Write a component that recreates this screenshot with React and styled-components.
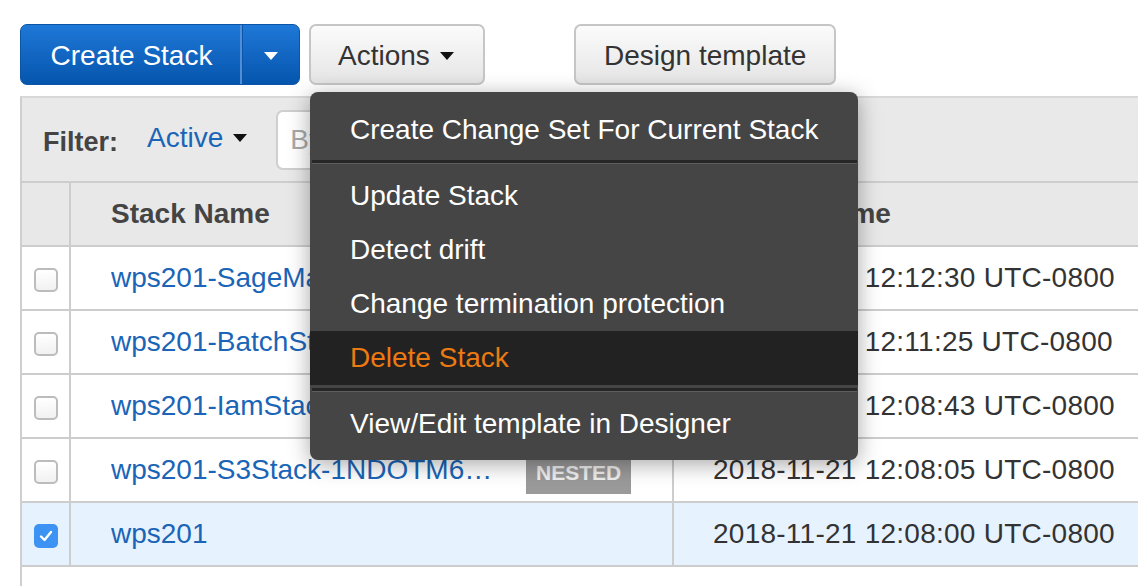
import React from "react";
import styled, { createGlobalStyle } from "styled-components";

const GlobalStyle = createGlobalStyle`
  html, body { margin: 0; padding: 0; background: #fff; }
  body { font-family: "Liberation Sans", Arial, Helvetica, sans-serif; overflow: hidden; }
  * { box-sizing: border-box; }
`;

const Page = styled.div`
  width: 1138px;
  height: 586px;
  padding: 24px 0 0 20px;
  overflow: hidden;
`;

const Toolbar = styled.div`
  display: flex;
  align-items: center;
  height: 61px;
`;

const SplitButton = styled.div`
  display: flex;
  width: 280px;
  height: 61px;
  border-radius: 7px;
  border: 1px solid #0b55a6;
  background: linear-gradient(#1f78d7, #0555ad);
  overflow: hidden;
`;

const SplitMain = styled.div`
  width: 219px;
  display: flex;
  align-items: center;
  justify-content: center;
  color: #fff;
  font-size: 28px;
  padding: 3px 0 0 2px;
`;

const SplitCaret = styled.div`
  flex: 1;
  display: flex;
  align-items: center;
  justify-content: center;
  padding-top: 2px;
  border-left: 2px solid #4f8fd9;
  box-shadow: inset 1px 0 0 #0a56ab;
`;

const Caret = styled.span`
  display: inline-block;
  width: 0;
  height: 0;
  border-left: ${(p) => p.$w / 2}px solid transparent;
  border-right: ${(p) => p.$w / 2}px solid transparent;
  border-top: ${(p) => p.$h}px solid ${(p) => p.$color};
  margin-left: ${(p) => p.$ml || 0}px;
`;

const GreyButton = styled.div`
  position: relative;
  height: 61px;
  width: ${(p) => p.$w}px;
  margin-left: ${(p) => p.$ml}px;
  border: 2px solid #c6c6c6;
  border-radius: 7px;
  background: linear-gradient(#fbfbfb, #e5e5e5);
  color: #333;
  font-size: 28px;
  display: flex;
  align-items: center;
  padding: 3px 0 0 ${(p) => p.$pl}px;
`;

const Menu = styled.div`
  position: absolute;
  left: -1px;
  top: 66px;
  width: 548px;
  background: #454545;
  border-radius: 8px;
  padding: 11px 0 9px;
  box-shadow: 0 4px 22px rgba(0, 0, 0, 0.35);
  z-index: 10;
`;

const MenuItem = styled.div`
  height: 54px;
  display: flex;
  align-items: center;
  padding-left: 40px;
  font-size: 28px;
  color: ${(p) => (p.$active ? "#ec7a12" : "#fff")};
  background: ${(p) => (p.$active ? "#222" : "transparent")};
  white-space: nowrap;
`;

const MenuSep = styled.div`
  margin: 3px 1px 5px 2px;
  border-top: 3px solid #262626;
  border-bottom: 1px solid #5e5e5e;
`;

const Panel = styled.div`
  margin-top: 11px;
  width: 1300px;
  height: 500px;
  border-left: 2px solid #cfcfcf;
  border-top: 2px solid #d8d8d8;
`;

const FilterBar = styled.div`
  height: 83px;
  background: #e9e9e9;
  display: flex;
  align-items: center;
  padding-left: 21px;
`;

const FilterLabel = styled.span`
  font-weight: bold;
  font-size: 27px;
  color: #444;
  margin-top: 5px;
`;

const FilterValue = styled.span`
  display: flex;
  align-items: center;
  color: #1a65b7;
  font-size: 28px;
  margin-left: 29px;
  margin-top: -3px;
`;

const SearchInput = styled.div`
  margin-left: 29px;
  width: 420px;
  height: 60px;
  background: #fff;
  border: 2px solid #cfcfcf;
  border-radius: 7px;
  display: flex;
  align-items: center;
  padding-left: 12px;
  font-size: 28px;
  color: #a8a8a8;
`;

const Table = styled.table`
  border-collapse: collapse;
  table-layout: fixed;
  width: 1300px;
`;

const HeadCell = styled.th`
  height: 64px;
  background: #e8e8e8;
  border-top: 2px solid #cdcdcd;
  border-bottom: 2px solid #cdcdcd;
  border-right: 2px solid #cdcdcd;
  text-align: left;
  font-size: 28px;
  font-weight: bold;
  color: #444;
  padding: 0 0 0 ${(p) => p.$pl || 0}px;
  width: ${(p) => p.$w}px;
`;

const Row = styled.tr`
  background: ${(p) => (p.$selected ? "#e6f2fd" : "#fff")};
`;

const Cell = styled.td`
  height: 64px;
  border-bottom: 2px solid #cdcdcd;
  border-right: 2px solid #cdcdcd;
  padding: 0 0 0 ${(p) => p.$pl || 0}px;
  font-size: 28px;
  color: #333;
  white-space: nowrap;
  vertical-align: middle;
  letter-spacing: ${(p) => p.$ls || 0}px;
`;

const Check = styled.span`
  width: 24px;
  height: 24px;
  margin-left: 12px;
  margin-top: 4px;
  border-radius: 5px;
  border: ${(p) => (p.$checked ? "none" : "2px solid #bcbcbc")};
  background: ${(p) => (p.$checked ? "#3c93f3" : "linear-gradient(#fff, #f1f1f1)")};
  display: flex;
  align-items: center;
  justify-content: center;
`;

const NameWrap = styled.div`
  display: flex;
  align-items: center;
`;

const NameLink = styled.span`
  display: inline-block;
  max-width: 388px;
  overflow: hidden;
  text-overflow: ellipsis;
  white-space: nowrap;
  color: #1a65b7;
`;

const Badge = styled.span`
  margin-left: 27px;
  margin-top: 4px;
  background: #9a9a9a;
  color: #eee;
  font-weight: bold;
  font-size: 21px;
  height: 44px;
  padding: 2px 10px 0;
  display: inline-flex;
  align-items: center;
`;

const rows = [
  { name: "wps201-SageMakerStack-1K3JQ2XZ7", nested: true, time: "2018-11-21 12:12:30 UTC-0800" },
  { name: "wps201-BatchStack-1H8CLXW0QF2V", nested: true, time: "2018-11-21 12:11:25 UTC-0800" },
  { name: "wps201-IamStack-1T4YJBX9ZP0MQ", nested: true, time: "2018-11-21 12:08:43 UTC-0800" },
  { name: "wps201-S3Stack-1NDOTM6XK2JQ", nested: true, time: "2018-11-21 12:08:05 UTC-0800" },
  { name: "wps201", nested: false, selected: true, time: "2018-11-21 12:08:00 UTC-0800" },
];

export default function App() {
  return (
    <>
      <GlobalStyle />
      <Page>
        <Toolbar>
          <SplitButton>
            <SplitMain>Create Stack</SplitMain>
            <SplitCaret>
              <Caret $w={15} $h={8} $color="#fff" />
            </SplitCaret>
          </SplitButton>
          <GreyButton $w={176} $ml={9} $pl={27}>
            Actions
            <Caret $w={14} $h={8} $color="#111" $ml={10} />
            <Menu>
              <MenuItem>Create Change Set For Current Stack</MenuItem>
              <MenuSep />
              <MenuItem>Update Stack</MenuItem>
              <MenuItem>Detect drift</MenuItem>
              <MenuItem>Change termination protection</MenuItem>
              <MenuItem $active>Delete Stack</MenuItem>
              <MenuSep />
              <MenuItem>View/Edit template in Designer</MenuItem>
            </Menu>
          </GreyButton>
          <GreyButton $w={262} $ml={89} $pl={28}>
            Design template
          </GreyButton>
        </Toolbar>
        <Panel>
          <FilterBar>
            <FilterLabel>Filter:</FilterLabel>
            <FilterValue>
              Active
              <Caret $w={14} $h={8} $color="#111" $ml={10} />
            </FilterValue>
            <SearchInput>By Stack Name</SearchInput>
          </FilterBar>
          <Table>
            <thead>
              <tr>
                <HeadCell $w={48} />
                <HeadCell $w={603} $pl={40}>Stack Name</HeadCell>
                <HeadCell $w={649} $pl={40}>Created Time</HeadCell>
              </tr>
            </thead>
            <tbody>
              {rows.map((r) => (
                <Row key={r.name} $selected={r.selected}>
                  <Cell>
                    <Check $checked={r.selected}>
                      {r.selected && (
                        <svg width="14" height="12" viewBox="0 0 14 12">
                          <path d="M2 6.5 L5.5 10 L12 2" fill="none" stroke="#fff" strokeWidth="2.4" strokeLinecap="round" strokeLinejoin="round" />
                        </svg>
                      )}
                    </Check>
                  </Cell>
                  <Cell $pl={40}>
                    <NameWrap>
                      <NameLink>{r.name}</NameLink>
                      {r.nested && <Badge>NESTED</Badge>}
                    </NameWrap>
                  </Cell>
                  <Cell $pl={39} $ls={0.25}>{r.time}</Cell>
                </Row>
              ))}
            </tbody>
          </Table>
        </Panel>
      </Page>
    </>
  );
}
